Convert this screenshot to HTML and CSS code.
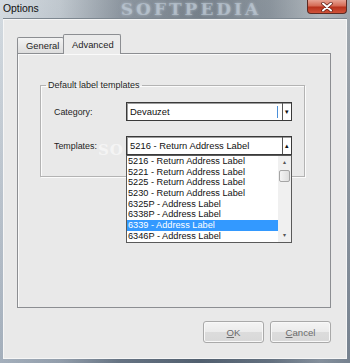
FILE: index.html
```html
<!DOCTYPE html>
<html lang="en">

<head>
  <meta charset="UTF-8" />
  <title>Options</title>
  <link rel="stylesheet" href="styles.css">
</head>

<body>
  <div class="window">
    <!-- Title bar -->
    <div class="titlebar">
      <span class="title">Options</span>
      <span class="title-mark">SOFTPEDIA</span>
      <div class="close">
        <svg width="14" height="10" viewBox="0 0 14 10">
          <path d="M3 1.5 L11 8.5 M11 1.5 L3 8.5" stroke="#5a1a12" stroke-width="3.4" stroke-linecap="round" />
          <path d="M3 1.5 L11 8.5 M11 1.5 L3 8.5" stroke="#ffffff" stroke-width="2" stroke-linecap="round" />
        </svg>
      </div>
    </div>

    <!-- Client area -->
    <div class="client">
      <div class="tabs">
        <div class="tab">General</div>
        <div class="tab active">Advanced</div>
      </div>

      <div class="panel">
        <fieldset class="group">
          <legend>Default label templates</legend>

          <!-- watermark, mostly hidden behind the combo -->
          <span class="mark">SO</span>

          <div class="row">
            <label>Category:</label>
            <div class="combo">
              <span class="combo-text">Devauzet</span>
              <span class="caret"></span>
              <span class="combo-btn">&#9662;</span>
            </div>
          </div>

          <div class="row">
            <label>Templates:</label>
            <div class="combo">
              <span class="combo-text">5216 - Return Address Label</span>
              <span class="combo-btn">&#9652;</span>

              <div class="droplist">
                <ul class="items">
                  <li>5216 - Return Address Label</li>
                  <li>5221 - Return Address Label</li>
                  <li>5225 - Return Address Label</li>
                  <li>5230 - Return Address Label</li>
                  <li>6325P - Address Label</li>
                  <li>6338P - Address Label</li>
                  <li class="selected">6339 - Address Label</li>
                  <li>6346P - Address Label</li>
                </ul>
                <div class="scrollbar">
                  <span class="arrow">&#9652;</span>
                  <span class="thumb"></span>
                  <span class="track"></span>
                  <span class="arrow">&#9662;</span>
                </div>
              </div>
            </div>
          </div>
        </fieldset>
      </div>

      <div class="buttons">
        <button class="btn"><u>O</u>K</button>
        <button class="btn"><u>C</u>ancel</button>
      </div>
    </div>
  </div>
</body>

</html>
```

FILE: styles.css
```css
body {
  margin: 0;
  font-family: 'Liberation Sans', Arial, sans-serif;
  font-size: 9px;
  color: #1a1a1a;
  overflow: hidden;
}

.window {
  width: 350px;
  height: 363px;
  background:
    linear-gradient(to bottom, rgba(255, 255, 255, 0.15), rgba(40, 60, 90, 0.25)),
    linear-gradient(90deg, #cdd5dc 0, #b5bec6 60px, #7a8590 120px, #5f6b76 200px, #76818b 270px, #a3abb2 320px, #8f98a0 350px);
  display: flex;
  flex-direction: column;
}

.titlebar {
  height: 19px;
  display: flex;
  align-items: flex-start;
  position: relative;
  overflow: hidden;
}

.title {
  font-size: 10.4px;
  line-height: 18px;
  margin-left: 3px;
  color: #111;
}

.title-mark {
  margin-left: 82px;
  font-family: 'DejaVu Serif', serif;
  font-weight: bold;
  font-size: 17px;
  line-height: 19px;
  letter-spacing: 3px;
  color: rgba(200, 212, 224, 0.5);
  text-shadow: 0 0 3px rgba(200, 212, 224, 0.6);
}

.close {
  position: absolute;
  top: 0;
  right: 3px;
  width: 38px;
  height: 13px;
  border: 1px solid #5b2b24;
  border-top: none;
  border-radius: 0 0 4px 4px;
  background: linear-gradient(to bottom, #e7a394 0, #d56b55 45%, #b8321c 55%, #d0533a 100%);
  display: flex;
  align-items: center;
  justify-content: center;
}

.client {
  height: 340px;
  margin: 0 3px 0 3px;
  background: #e9e9e9;
  border: 1px solid #f6f6f6;
  box-shadow: 0 -1px 0 #7d8790;
  box-sizing: border-box;
  padding: 14px 15px 0 13px;
  display: flex;
  flex-direction: column;
}

.tabs {
  display: flex;
  align-items: flex-end;
  height: 19px;
}

.tab {
  height: 16px;
  box-sizing: border-box;
  padding: 0 8px;
  width: 47px;
  border: 1px solid #8c8e92;
  border-bottom: none;
  border-radius: 2px 2px 0 0;
  background: linear-gradient(to bottom, #f3f3f3, #dddddd);
  font-size: 9.4px;
  line-height: 15px;
  color: #1e1e1e;
}

.tab.active {
  height: 20px;
  width: 58px;
  margin-bottom: -1px;
  margin-left: -1px;
  background: #ebebeb;
  line-height: 20px;
  padding-left: 8px;
  z-index: 1;
}

.panel {
  height: 255px;
  box-sizing: border-box;
  border: 1px solid #8c8e92;
  box-shadow: inset 1px 1px 0 #fafafa;
  background: #e9e9e9;
  padding: 26px 0 0 22px;
}

.group {
  position: relative;
  width: 265px;
  height: 97px;
  box-sizing: border-box;
  margin: 0;
  padding: 7px 0 0 5px;
  border: 1px solid #b3b3b3;
  box-shadow: 1px 1px 0 #fbfbfb, inset 1px 1px 0 #fbfbfb;
}

.group legend {
  padding: 0 2px;
  font-size: 9px;
  line-height: 11px;
  color: #1e1e1e;
}

.row {
  display: flex;
  align-items: center;
  margin-left: 8px;
  margin-top: 4px;
}

.row + .row {
  margin-top: 15px;
}

.row label {
  width: 72px;
  font-size: 8.9px;
  color: #1e1e1e;
}

.combo {
  position: relative;
  z-index: 1;
  width: 166px;
  height: 19px;
  box-sizing: border-box;
  border: 1px solid #3a3a3a;
  box-shadow: inset 1px 1px 0 #9c9c9c;
  background: #fff;
  display: flex;
  align-items: center;
}

.combo-text {
  flex: 1;
  padding-left: 3px;
  font-size: 9.4px;
  line-height: 12px;
  color: #111;
}

.caret {
  width: 1px;
  height: 12px;
  background: #4a8fd9;
  margin-right: 4px;
}

.combo-btn {
  width: 8px;
  height: 100%;
  border-left: 1px solid #555;
  font-size: 7px;
  line-height: 17px;
  text-align: center;
  color: #111;
}

.droplist {
  position: absolute;
  top: 18px;
  left: -1px;
  width: 166px;
  height: 88px;
  box-sizing: border-box;
  border: 1px solid #5a5a5a;
  background: #fff;
  display: flex;
  z-index: 2;
}

.items {
  list-style: none;
  margin: 0;
  padding: 0;
  flex: 1;
}

.items li {
  height: 10.7px;
  line-height: 10.7px;
  padding-left: 1px;
  font-size: 9.2px;
  white-space: nowrap;
  color: #111;
}

.items li.selected {
  background: #3399ff;
  color: #fff;
}

.scrollbar {
  width: 13px;
  background: #f0f0f0;
  display: flex;
  flex-direction: column;
  align-items: center;
}

.arrow {
  height: 13px;
  font-size: 6px;
  line-height: 13px;
  color: #555;
}

.thumb {
  margin-top: 1px;
  width: 11px;
  height: 12px;
  box-sizing: border-box;
  border: 1px solid #a5a5a5;
  border-radius: 2px;
  background: linear-gradient(90deg, #f4f4f4, #dedede);
}

.track {
  flex: 1;
}

.mark {
  position: absolute;
  left: 57px;
  top: 52px;
  font-family: 'DejaVu Serif', serif;
  font-weight: bold;
  font-size: 15px;
  line-height: 15px;
  letter-spacing: 1px;
  color: rgba(255, 255, 255, 0.55);
  pointer-events: none;
}

.buttons {
  display: flex;
  justify-content: flex-end;
  gap: 6px;
  margin-top: 13px;
}

.btn {
  width: 61px;
  height: 22px;
  border: 1px solid #a9a9a9;
  border-radius: 3px;
  background: linear-gradient(to bottom, #f4f4f4 0, #ebebeb 50%, #dcdcdc 51%, #d8d8d8 100%);
  box-shadow: inset 0 0 0 1px #f8f8f8;
  font-family: 'Liberation Sans', Arial, sans-serif;
  font-size: 9.6px;
  color: #6b6b6b;
  padding: 0;
}
```
